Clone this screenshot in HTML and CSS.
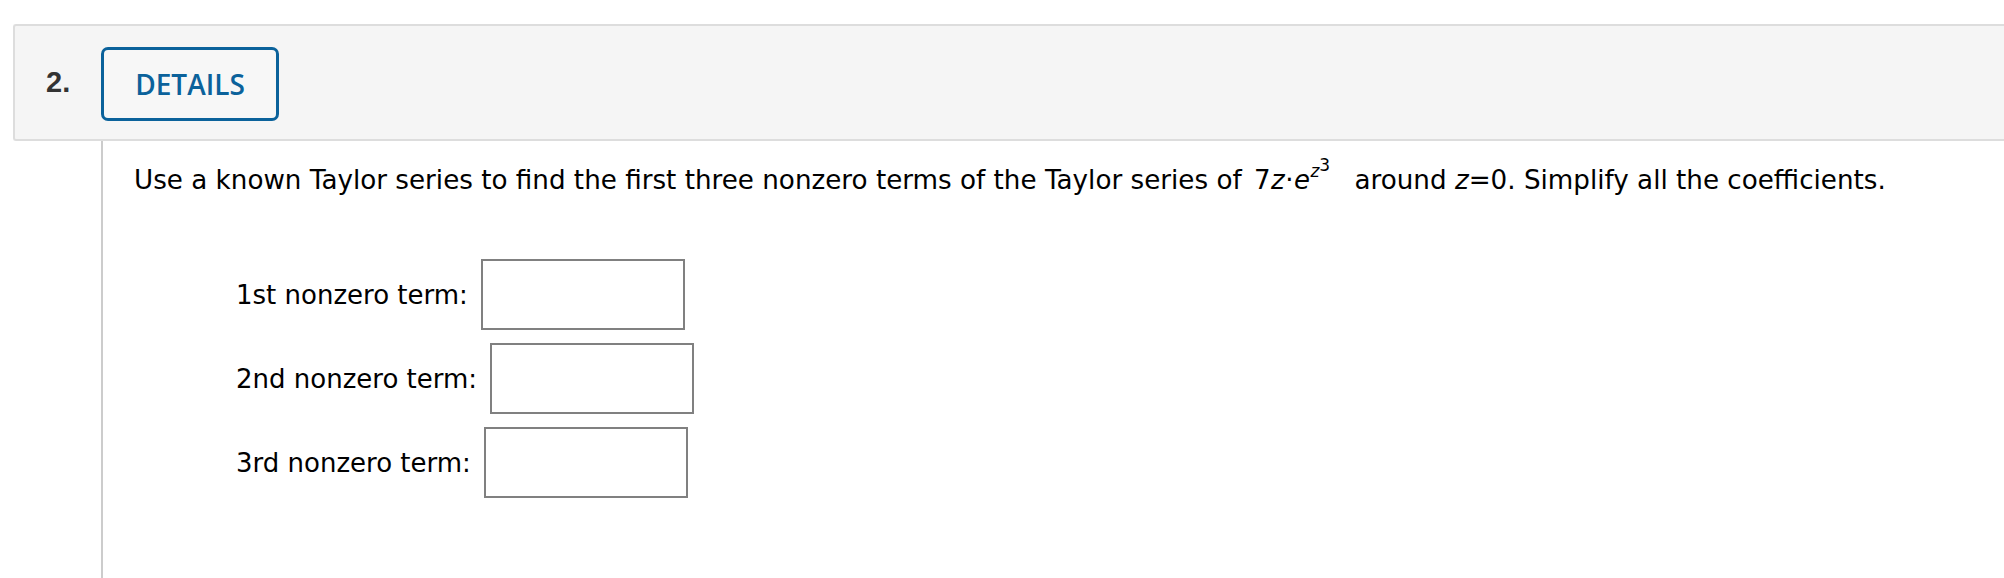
FILE: index.html
```html
<!DOCTYPE html>
<html>
<head>
<meta charset="utf-8">
<link rel="stylesheet" href="styles.css">
</head>
<body>
<div class="question">
  <div class="q-header">
    <span class="q-num">2.</span>
    <button class="details-btn">DETAILS</button>
  </div>
  <div class="q-body">
    <p class="prompt">Use a known Taylor series to find the first three nonzero terms of the Taylor series of <span class="math">7<i>z</i>·<i>e</i><sup><i>z</i><sup>3</sup></sup></span> around <i class="var">z</i>=0. Simplify all the coefficients.</p>
    <div class="answers">
      <div class="row"><span class="label">1st nonzero term:</span><span class="box"></span></div>
      <div class="row"><span class="label">2nd nonzero term:</span><span class="box"></span></div>
      <div class="row"><span class="label">3rd nonzero term:</span><span class="box"></span></div>
    </div>
  </div>
</div>
</body>
</html>
```
FILE: styles.css
```css
html, body {
  margin: 0;
  padding: 0;
  background: #ffffff;
}
body {
  height: 578px;
  overflow: hidden;
}
.question {
  padding-top: 24px;
  padding-left: 13px;
}
.q-header {
  height: 113px;
  background: #f5f5f5;
  border: 2px solid #dddddd;
  border-right: none;
  border-radius: 3px 0 0 3px;
  display: flex;
  align-items: center;
  padding-left: 31px;
}
.q-num {
  font-family: "Liberation Sans", Arial, sans-serif;
  font-weight: bold;
  font-size: 29px;
  color: #333333;
  width: 55px;
}
.details-btn {
  box-sizing: border-box;
  width: 178px;
  height: 74px;
  border: 3px solid #0b629b;
  border-radius: 7px;
  background: #f7f7f7;
  color: #0b629b;
  font-family: "Open Sans", sans-serif;
  font-weight: 600;
  font-size: 28px;
  padding: 0;
  margin-top: 2px;
  display: flex;
  align-items: center;
  justify-content: center;
}
.q-body {
  margin-left: 88px;
  border-left: 2px solid #cccccc;
  padding-left: 31px;
  height: 450px;
}
.prompt {
  margin: 0;
  padding-top: 24px;
  font-family: "DejaVu Sans", Verdana, sans-serif;
  font-size: 26.2px;
  color: #000000;
  line-height: 30px;
}
.math {
  font-family: "DejaVu Sans", Verdana, sans-serif;
  font-size: 26px;
  letter-spacing: 0.5px;
  margin: 0 16px 0 4px;
}
.math sup {
  font-size: 17px;
  line-height: 0;
  vertical-align: 12px;
  letter-spacing: 0;
}
.math sup sup {
  font-size: 17px;
  vertical-align: 6px;
}
.var {
  font-style: italic;
}
.answers {
  margin-top: 64px;
  padding-left: 102px;
  display: flex;
  flex-direction: column;
  gap: 13px;
}
.row {
  display: flex;
  align-items: center;
  gap: 13px;
}
.label {
  font-family: "DejaVu Sans", Verdana, sans-serif;
  font-size: 26px;
  color: #000000;
}
.box {
  box-sizing: border-box;
  width: 204px;
  height: 71px;
  border: 2px solid #808080;
  background: #ffffff;
}
```
